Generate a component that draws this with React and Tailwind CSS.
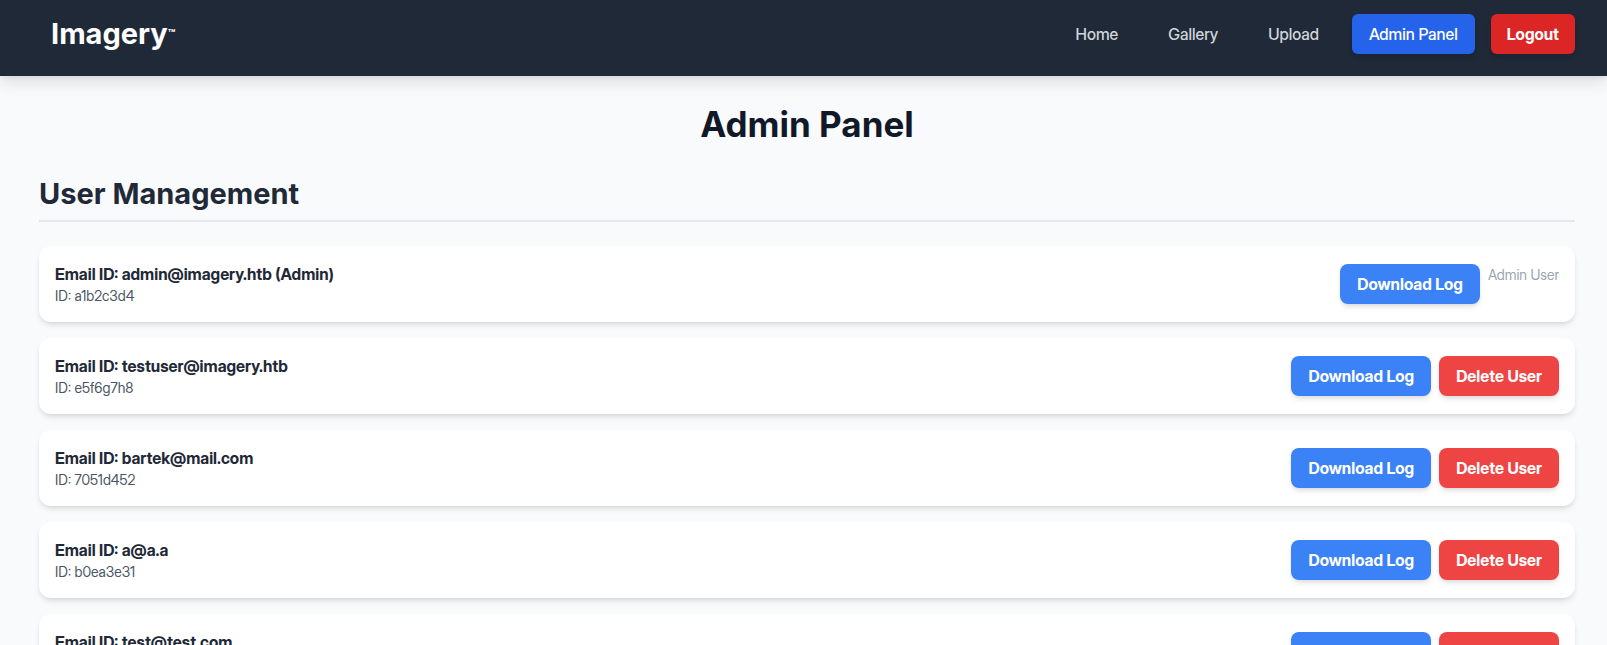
const users = [
  { email: 'admin@imagery.htb', id: 'a1b2c3d4', admin: true },
  { email: 'testuser@imagery.htb', id: 'e5f6g7h8' },
  { email: 'bartek@mail.com', id: '7051d452' },
  { email: 'a@a.a', id: 'b0ea3e31' },
  { email: 'test@test.com', id: 'c4d81f07' },
];

const navLinks = ['Home', 'Gallery', 'Upload'];

function Header() {
  return (
    <header className="flex items-center justify-between bg-[#1f2937] pt-3.5 pr-8 pb-[22px] pl-[51px] shadow-[0_7px_15px_0_rgba(0,0,0,0.1),0_0_6px_0_rgba(0,0,0,0.1)]">
      <a href="#home" className="flex h-10 items-center font-['Inter',sans-serif] text-[29px] font-bold text-white">
        <span>Imagery</span>
        <span className="text-xs leading-none">™</span>
      </a>
      <nav className="flex items-center gap-4 font-medium">
        {navLinks.map((label) => (
          <a key={label} href={`#${label.toLowerCase()}`} className="px-[17px] py-2 text-[#d1d5db]">
            {label}
          </a>
        ))}
        <a href="#admin" className="rounded-md bg-[#2563eb] px-[17px] py-2 text-white shadow-md">
          Admin Panel
        </a>
        <button type="button" className="rounded-md bg-[#dc2626] px-4 py-2 font-bold text-white shadow-md">
          Logout
        </button>
      </nav>
    </header>
  );
}

function UserCard({ user }) {
  return (
    <li className="flex items-center justify-between rounded-xl bg-white p-4 shadow-md">
      <div>
        <p className="font-bold text-[#1f2937]">
          Email ID: {user.email}
          {user.admin && ' (Admin)'}
        </p>
        <p className="text-sm text-[#4b5563]">ID: {user.id}</p>
      </div>
      <div className="flex items-start gap-2">
        <button type="button" className="rounded-lg bg-[#3b82f6] px-[17px] py-2 font-bold text-white shadow-md">
          Download Log
        </button>
        {user.admin ? (
          <span className="text-sm/[22px] text-[#9ca3af]">Admin User</span>
        ) : (
          <button type="button" className="rounded-lg bg-[#ef4444] px-[17px] py-2 font-bold text-white shadow-md">
            Delete User
          </button>
        )}
      </div>
    </li>
  );
}

export default function App() {
  return (
    <div className="min-h-screen bg-[#f9fafb] font-['Inter_Display','Inter',sans-serif]">
      <Header />
      <main className="pt-7 pr-8 pb-8 pl-[39px]">
        <h1 className="mb-8 text-center font-['Inter',sans-serif] text-[35px]/10 font-bold text-[#111827]">
          Admin Panel
        </h1>
        <section>
          <h2 className="mb-6 border-b-2 border-[#e5e7eb] pb-2 font-['Inter',sans-serif] text-[29px]/9 font-bold text-[#1f2937]">
            User Management
          </h2>
          <ul className="flex flex-col gap-4">
            {users.map((user) => (
              <UserCard key={user.id} user={user} />
            ))}
          </ul>
        </section>
      </main>
    </div>
  );
}
